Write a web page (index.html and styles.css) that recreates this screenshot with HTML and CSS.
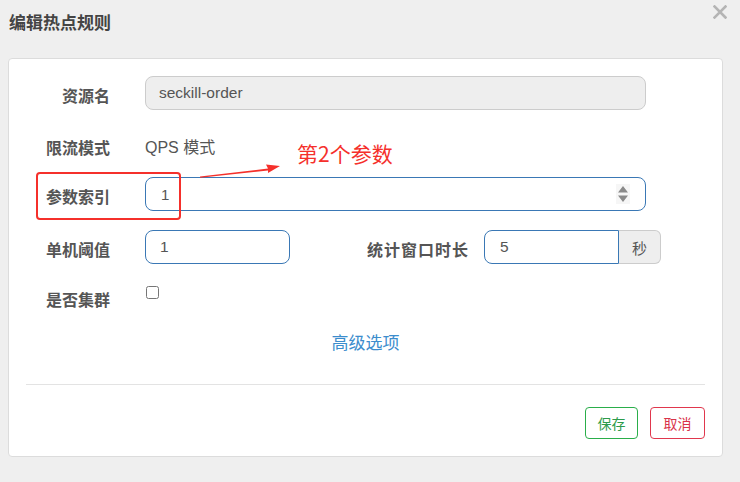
FILE: index.html
```html
<!DOCTYPE html>
<html lang="zh-CN">
<head>
<meta charset="utf-8">
<title>编辑热点规则</title>
<link rel="stylesheet" href="styles.css">
</head>
<body>
<div class="dialog">
  <header class="dlg-head">
    <h4 class="dlg-title">编辑热点规则</h4>
    <button class="close" aria-label="关闭">
      <svg width="14" height="14" viewBox="0 0 14 14"><path d="M1.5 1.5 L12.5 12.5 M12.5 1.5 L1.5 12.5" stroke="#b4b4b4" stroke-width="2.6" stroke-linecap="square"/></svg>
    </button>
  </header>
  <div class="panel">
    <form class="form">
      <div class="row r1">
        <label class="lbl">资源名</label>
        <input class="ctl ctl-wide ctl-ro" readonly value="seckill-order">
      </div>
      <div class="row r2">
        <label class="lbl">限流模式</label>
        <span class="static">QPS 模式</span>
      </div>
      <div class="row r3">
        <label class="lbl">参数索引</label>
        <div class="ctl ctl-wide ctl-num">
          <span class="val">1</span>
          <span class="spin">
            <svg width="12" height="18" viewBox="0 0 12 18"><path d="M6 1 L11 7.5 L1 7.5 Z M1 10.5 L11 10.5 L6 17 Z" fill="#8a8a8a"/></svg>
          </span>
        </div>
      </div>
      <div class="row r4">
        <label class="lbl">单机阈值</label>
        <input class="ctl ctl-short" value="1">
        <label class="lbl lbl-2">统计窗口时长</label>
        <div class="group">
          <input class="ctl ctl-grp" value="5">
          <span class="addon">秒</span>
        </div>
      </div>
      <div class="row r5">
        <label class="lbl">是否集群</label>
        <input type="checkbox" class="chk">
      </div>
    </form>
    <div class="adv-wrap"><a class="adv">高级选项</a></div>
    <hr class="sep">
    <div class="actions">
      <button class="btn btn-save">保存</button>
      <button class="btn btn-cancel">取消</button>
    </div>
    <div class="callout-box"></div>
    <svg class="callout-arrow" width="84" height="16" viewBox="0 0 84 16"><path d="M0 13.5 L68 5.5 L66 1.5 L80 3 L68 10 L68 7.5 L0 14.8 Z" fill="#f5302b"/></svg>
    <span class="callout-text">第2个参数</span>
  </div>
</div>
</body>
</html>
```
FILE: styles.css
```css
* { box-sizing: border-box; }
html, body { margin: 0; padding: 0; }
body {
  background: #efefef;
  font-family: "Liberation Sans", "Noto Sans CJK SC", sans-serif;
  color: #555;
  width: 740px;
  height: 482px;
  overflow: hidden;
}
.dialog { position: relative; }
.dlg-head {
  height: 58px;
  display: flex;
  align-items: flex-start;
  justify-content: space-between;
}
.dlg-title {
  margin: 11px 0 0 9px;
  font-size: 17px;
  line-height: 22px;
  font-weight: bold;
  color: #444;
  font-family: "Noto Sans CJK SC", sans-serif;
}
.close {
  border: 0;
  background: none;
  padding: 0;
  margin: 5px 13px 0 0;
  width: 14px;
  height: 14px;
  display: block;
}
.close svg { display: block; }
.panel {
  position: relative;
  margin: 0 17px 0 8px;
  background: #fff;
  border: 1px solid #dcdcdc;
  border-radius: 4px;
  padding: 17px 17px 17px 0;
  height: 399px;
}
.row { display: flex; align-items: center; height: 34px; }
.r2 { margin-top: 18px; }
.r3 { margin-top: 15px; }
.r4 { margin-top: 19px; }
.r5 { margin-top: 18px; align-items: flex-start; }
.lbl {
  width: 101px;
  margin-right: 35px;
  text-align: right;
  font-family: "Noto Sans CJK SC", sans-serif;
  font-weight: bold;
  font-size: 16px;
  line-height: 22px;
  padding-top: 4px;
  color: #555;
}
.r5 .lbl { padding-top: 6px; }
.lbl-2 { width: 179px; margin-right: 15px; letter-spacing: 1px; }
.static { font-size: 16px; color: #555; padding-top: 1px; }
.ctl {
  height: 34px;
  border: 1px solid #3a78b5;
  border-radius: 8px;
  font-family: "Liberation Sans", "Noto Sans CJK SC", sans-serif;
  font-size: 15.5px;
  color: #555;
  padding: 0 13px;
  background: #fff;
  outline: none;
}
.ctl-wide { width: 501px; }
.ctl-ro { background: #eee; border-color: #ccc; }
.ctl-num { display: flex; align-items: center; justify-content: space-between; padding: 0 15px 0 15px; }
.ctl-num .val { font-size: 15px; }
.spin { display: flex; align-items: center; justify-content: center; width: 14px; height: 20px; background: #f6f6f6; }
.spin svg { display: block; }
.ctl-short { width: 145px; padding-left: 14px; }
.group { display: flex; }
.ctl-grp { width: 135px; border-radius: 8px 0 0 8px; padding-left: 15px; }
.addon {
  width: 42px;
  height: 34px;
  background: #eee;
  border: 1px solid #ccc;
  border-left: 0;
  border-radius: 0 6px 6px 0;
  display: flex;
  align-items: center;
  justify-content: center;
  font-size: 15px;
  font-family: "Noto Sans CJK SC", sans-serif;
  color: #555;
}
.chk {
  margin: 4px 0 0 1px;
  width: 13px;
  height: 13px;
}
.adv-wrap { margin-top: 16px; text-align: center; padding-left: 17px; }
.adv {
  font-family: "Noto Sans CJK SC", sans-serif;
  font-size: 17px;
  line-height: 20px;
  color: #3c8dcd;
  cursor: pointer;
}
.sep {
  margin: 31px 0 0 17px;
  border: 0;
  border-top: 1px solid #e3e3e3;
  height: 0;
}
.actions {
  margin-top: 22px;
  display: flex;
  justify-content: flex-end;
  gap: 12px;
}
.btn {
  height: 32px;
  background: #fff;
  border-radius: 4px;
  font-family: "Noto Sans CJK SC", sans-serif;
  font-size: 14px;
  padding: 0;
}
.btn-save { width: 53px; border: 1px solid #2aae4a; color: #2d9b4a; }
.btn-cancel { width: 55px; border: 1px solid #e0374d; color: #d9334a; }
.callout-box {
  position: absolute;
  left: 27px;
  top: 113px;
  width: 145px;
  height: 48px;
  border: 2px solid #f5302b;
  border-radius: 4px;
}
.callout-arrow {
  position: absolute;
  left: 191px;
  top: 104px;
}
.callout-text {
  position: absolute;
  left: 288px;
  top: 81px;
  font-family: "Noto Sans CJK SC", sans-serif;
  font-size: 21px;
  line-height: 26px;
  color: #f5302b;
}
```
